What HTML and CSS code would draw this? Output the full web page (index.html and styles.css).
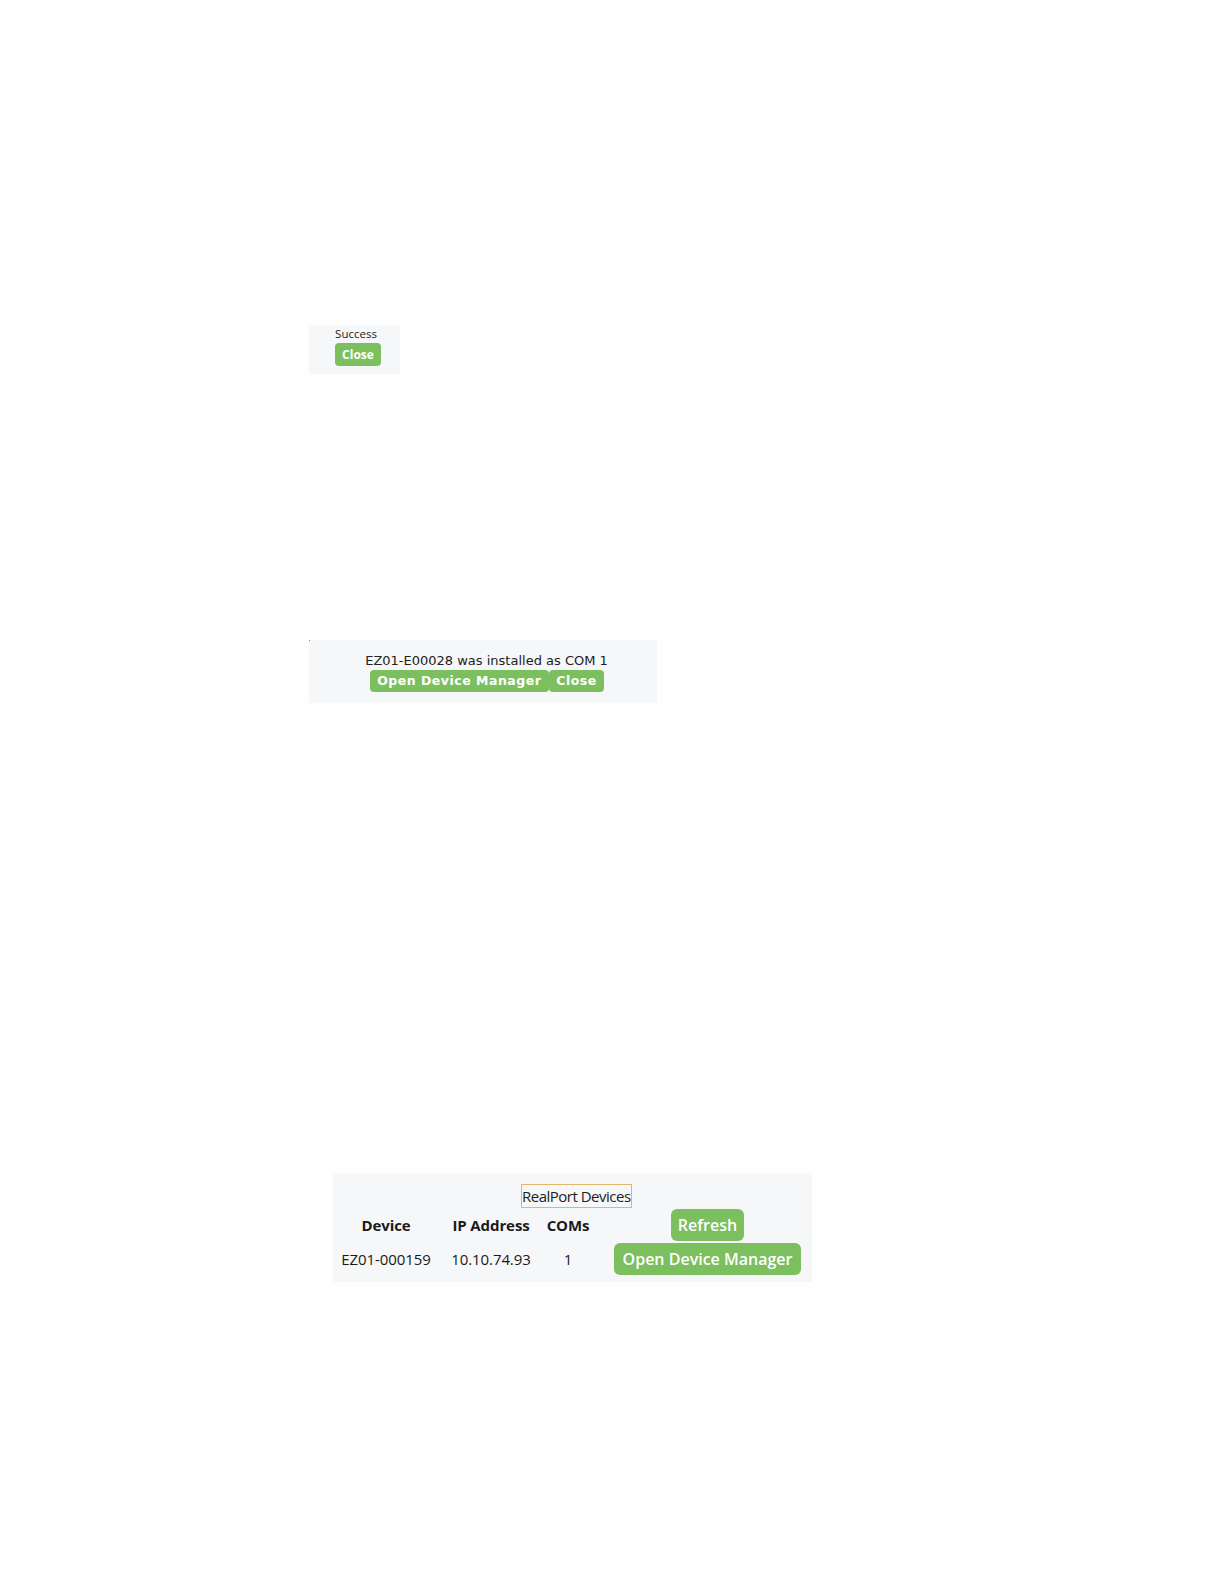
FILE: index.html
```html
<!DOCTYPE html>
<html>
<head>
<meta charset="utf-8">
<link rel="stylesheet" href="styles.css">
</head>
<body>
<div class="page">
  <div class="panel panel-success">
    <div class="msg-small">Success</div>
    <button class="btn btn-small">Close</button>
  </div>

  <div class="panel panel-installed">
    <span class="dot"></span>
    <div class="msg-mid">EZ01-E00028 was installed as COM 1</div>
    <div class="btn-row">
      <button class="btn btn-mid">Open Device Manager</button>
      <button class="btn btn-mid">Close</button>
    </div>
  </div>

  <div class="panel panel-devices">
    <div class="title-wrap"><span class="title">RealPort Devices</span></div>
    <div class="grid">
      <div class="th">Device</div>
      <div class="th">IP Address</div>
      <div class="th">COMs</div>
      <div class="cell-btn"><button class="btn btn-big btn-refresh">Refresh</button></div>
      <div class="td">EZ01-000159</div>
      <div class="td">10.10.74.93</div>
      <div class="td">1</div>
      <div class="cell-btn"><button class="btn btn-big">Open Device Manager</button></div>
    </div>
  </div>
</div>
</body>
</html>
```

FILE: styles.css
```css
html, body {
  margin: 0;
  padding: 0;
  background: #fefefe;
}
.page {
  display: flex;
  flex-direction: column;
  align-items: flex-start;
  padding-top: 325px;
}
.panel {
  background: #f6f7f8;
  box-sizing: border-box;
}
.btn {
  border: none;
  margin: 0;
  color: #ffffff;
  background: #7cbf5e;
  cursor: pointer;
  white-space: nowrap;
}
.panel-success {
  margin-left: 309px;
  width: 91px;
  height: 49px;
  display: flex;
  flex-direction: column;
  align-items: center;
  padding-top: 1px;
}
.msg-small {
  font-family: "Open Sans", "Noto Sans", sans-serif;
  font-size: 11.5px;
  line-height: 15px;
  color: #222;
  margin-left: 3px;
}
.btn-small {
  font-family: "Open Sans", sans-serif;
  font-weight: 700;
  font-size: 12px;
  width: 46px;
  height: 23px;
  border-radius: 4px;
  padding: 0;
  margin-top: 2px;
  margin-left: 7px;
}
.panel-installed {
  position: relative;
  margin-top: 266px;
  margin-left: 309px;
  width: 348px;
  height: 63px;
  display: flex;
  flex-direction: column;
  align-items: center;
  padding-top: 13px;
}
.dot {
  position: absolute;
  left: 0;
  top: 0;
  width: 1px;
  height: 1px;
  background: #888;
}
.msg-mid {
  font-family: "DejaVu Sans", Verdana, sans-serif;
  font-size: 13px;
  line-height: 16px;
  color: #222;
  margin-left: 7px;
}
.btn-row {
  display: flex;
  margin-left: 8px;
  margin-top: 1px;
}
.btn-mid {
  font-family: "DejaVu Sans", Verdana, sans-serif;
  font-weight: 700;
  font-size: 12.5px;
  letter-spacing: 0.5px;
  height: 22px;
  line-height: 22px;
  padding: 0 7.5px;
  border-radius: 4px;
}
.panel-devices {
  margin-top: 470px;
  margin-left: 333px;
  width: 479px;
  height: 109px;
  padding-top: 11px;
}
.title-wrap {
  display: flex;
  justify-content: flex-start;
  padding-left: 188px;
}
.title {
  font-family: "Open Sans", "Noto Sans", sans-serif;
  font-size: 15px;
  line-height: 22px;
  color: #222;
  border: 1px solid #e3b56a;
  padding: 0;
  letter-spacing: -0.5px;
}
.grid {
  display: grid;
  grid-template-columns: 106px 104px 50px 208px;
  grid-template-rows: 34px 34px;
  align-items: center;
}
.cell-btn {
  display: flex;
  justify-content: center;
  padding-left: 21px;
  width: 208px;
  box-sizing: border-box;
}
.th, .td {
  text-align: center;
  font-family: "Open Sans", "Noto Sans", sans-serif;
  font-size: 15px;
  color: #1a1a1a;
}
.th {
  font-weight: 700;
  letter-spacing: -0.1px;
}
.td {
  letter-spacing: -0.1px;
}
.btn-big {
  font-family: "Open Sans", "Noto Sans", sans-serif;
  font-weight: 600;
  font-size: 16px;
  height: 32px;
  padding: 0 9px;
  border-radius: 6px;
  flex-shrink: 0;
}
.btn-refresh {
  padding: 0 7px;
}
```
